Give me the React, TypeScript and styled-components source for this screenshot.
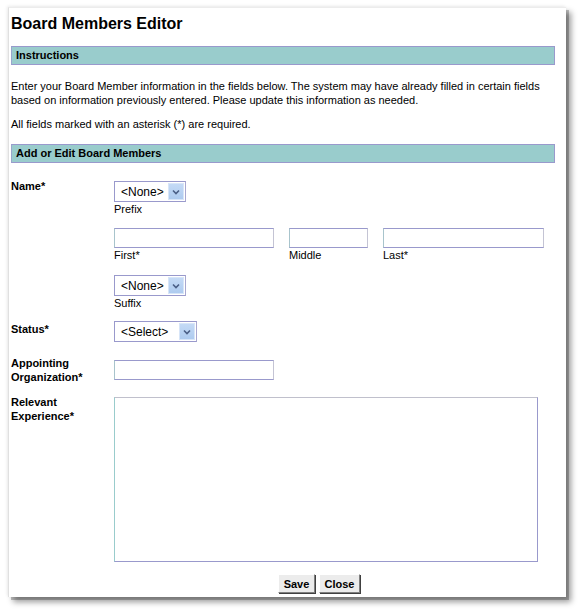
import React from "react";
import styled, { createGlobalStyle } from "styled-components";

const Global = createGlobalStyle`
  html, body { margin: 0; padding: 0; background: #ffffff; }
  body { font-family: "Liberation Sans", Arial, sans-serif; font-size: 11px; color: #000; }
  #root { padding: 7px 0 13px 8px; }
`;

const Panel = styled.div`
  box-sizing: border-box;
  width: 558px;
  height: 590px;
  background: #ffffff;
  border-left: 1px solid #e0e0e0;
  border-top: 1px solid #ececec;
  box-shadow: 3px 3px 0 rgba(0, 0, 0, 0.22), 5px 5px 6px rgba(0, 0, 0, 0.4), -1px -1px 3px rgba(0, 0, 0, 0.08);
  padding: 6px 11px 0 2px;
`;

const Title = styled.h1`
  margin: 0 0 13px;
  font-size: 16px;
  line-height: 19px;
  font-weight: bold;
`;

const SectionBar = styled.div<{ $top?: number }>`
  margin-top: ${(p) => p.$top ?? 0}px;
  height: 17px;
  line-height: 17px;
  background: #99cccc;
  border: 1px solid #9999cc;
  border-left-color: #99a6cc;
  padding-left: 4px;
  font-weight: bold;
  font-size: 11px;
`;

const Para = styled.p<{ $top: number }>`
  margin: ${(p) => p.$top}px 0 0;
  line-height: 14px;
  font-size: 11px;
`;

const Form = styled.div`
  margin-top: 16px;
  display: flex;
  flex-direction: column;
`;

const Row = styled.div<{ $top?: number }>`
  display: grid;
  grid-template-columns: 103px 1fr;
  margin-top: ${(p) => p.$top ?? 0}px;
`;

const Label = styled.div<{ $pad?: number }>`
  font-weight: bold;
  line-height: 14px;
  padding-top: ${(p) => p.$pad ?? 0}px;
`;

const Controls = styled.div<{ $pad?: number }>`
  padding-top: ${(p) => p.$pad ?? 0}px;
  display: flex;
  flex-direction: column;
  align-items: flex-start;
`;

const Caption = styled.div`
  line-height: 14px;
`;

const FakeSelect = styled.div<{ $w: number }>`
  box-sizing: border-box;
  width: ${(p) => p.$w}px;
  height: 21px;
  border: 1px solid #9999cc;
  border-right-color: #a8a8d0;
  background: #fff;
  display: flex;
  align-items: center;
  justify-content: space-between;
  padding: 0 1px 0 6px;
  font-size: 12px;
`;

const ArrowBtn = styled.span`
  box-sizing: border-box;
  width: 16px;
  height: 17px;
  background: linear-gradient(#c4daf6, #aecbef);
  border: 1px solid #d7e5f8;
  display: flex;
  align-items: center;
  justify-content: center;
`;

const NameInputs = styled.div`
  margin-top: 12px;
  display: flex;
  gap: 15px;
`;

const Field = styled.div`
  display: flex;
  flex-direction: column;
`;

const TextInput = styled.input<{ $w: number }>`
  box-sizing: border-box;
  width: ${(p) => p.$w}px;
  height: 20px;
  margin: 0;
  border: 1px solid #9999cc;
  border-left-color: #a8c4cc;
  border-right-color: #c4c4d4;
  background: #fff;
  padding: 0 2px;
  font-family: inherit;
  font-size: 11px;
  outline: none;
`;

const TextArea = styled.textarea`
  box-sizing: border-box;
  width: 424px;
  height: 165px;
  margin: 0;
  border: 1px solid #9999cc;
  border-top-color: #c0c0cc;
  border-left-color: #99cccc;
  resize: none;
  font-family: inherit;
  font-size: 11px;
  outline: none;
  display: block;
`;

const ButtonBar = styled.div`
  margin-top: 12px;
  padding-left: 267px;
  display: flex;
  gap: 4px;
`;

const Button = styled.button<{ $w: number }>`
  box-sizing: border-box;
  width: ${(p) => p.$w}px;
  height: 19px;
  margin: 0;
  padding: 0;
  background: #ececec;
  border: 1px solid;
  border-color: #ffffff #808080 #808080 #ffffff;
  box-shadow: 1px 1px 0 #404040;
  font-family: "Liberation Sans", Arial, sans-serif;
  font-weight: bold;
  font-size: 11px;
  color: #000;
`;

const Chevron = () => (
  <svg width="10" height="8" viewBox="0 0 10 8">
    <path d="M2 2.5 L5 5.5 L8 2.5" fill="none" stroke="#4a5f86" strokeWidth="1.6" />
  </svg>
);

const Select = ({ w, text }: { w: number; text: string }) => (
  <FakeSelect $w={w}>
    <span>{text}</span>
    <ArrowBtn>
      <Chevron />
    </ArrowBtn>
  </FakeSelect>
);

export default function App() {
  return (
    <>
      <Global />
      <Panel>
        <Title>Board Members Editor</Title>
        <SectionBar>Instructions</SectionBar>
        <Para $top={14}>
          Enter your Board Member information in the fields below. The system may have already filled in certain fields
          based on information previously entered. Please update this information as needed.
        </Para>
        <Para $top={10}>All fields marked with an asterisk (*) are required.</Para>
        <SectionBar $top={13}>Add or Edit Board Members</SectionBar>
        <Form>
          <Row>
            <Label>Name*</Label>
            <Controls $pad={2}>
              <Select w={72} text="<None>" />
              <Caption>Prefix</Caption>
              <NameInputs>
                <Field>
                  <TextInput $w={160} />
                  <Caption>First*</Caption>
                </Field>
                <Field>
                  <TextInput $w={79} />
                  <Caption>Middle</Caption>
                </Field>
                <Field>
                  <TextInput $w={161} />
                  <Caption>Last*</Caption>
                </Field>
              </NameInputs>
              <Controls $pad={13}>
                <Select w={72} text="<None>" />
                <Caption>Suffix</Caption>
              </Controls>
            </Controls>
          </Row>
          <Row $top={11}>
            <Label $pad={1}>Status*</Label>
            <Controls>
              <Select w={83} text="<Select>" />
            </Controls>
          </Row>
          <Row $top={14}>
            <Label>
              Appointing
              <br />
              Organization*
            </Label>
            <Controls $pad={4}>
              <TextInput $w={160} />
            </Controls>
          </Row>
          <Row $top={11}>
            <Label>
              Relevant
              <br />
              Experience*
            </Label>
            <Controls $pad={2}>
              <TextArea />
            </Controls>
          </Row>
        </Form>
        <ButtonBar>
          <Button $w={37}>Save</Button>
          <Button $w={41}>Close</Button>
        </ButtonBar>
      </Panel>
    </>
  );
}
